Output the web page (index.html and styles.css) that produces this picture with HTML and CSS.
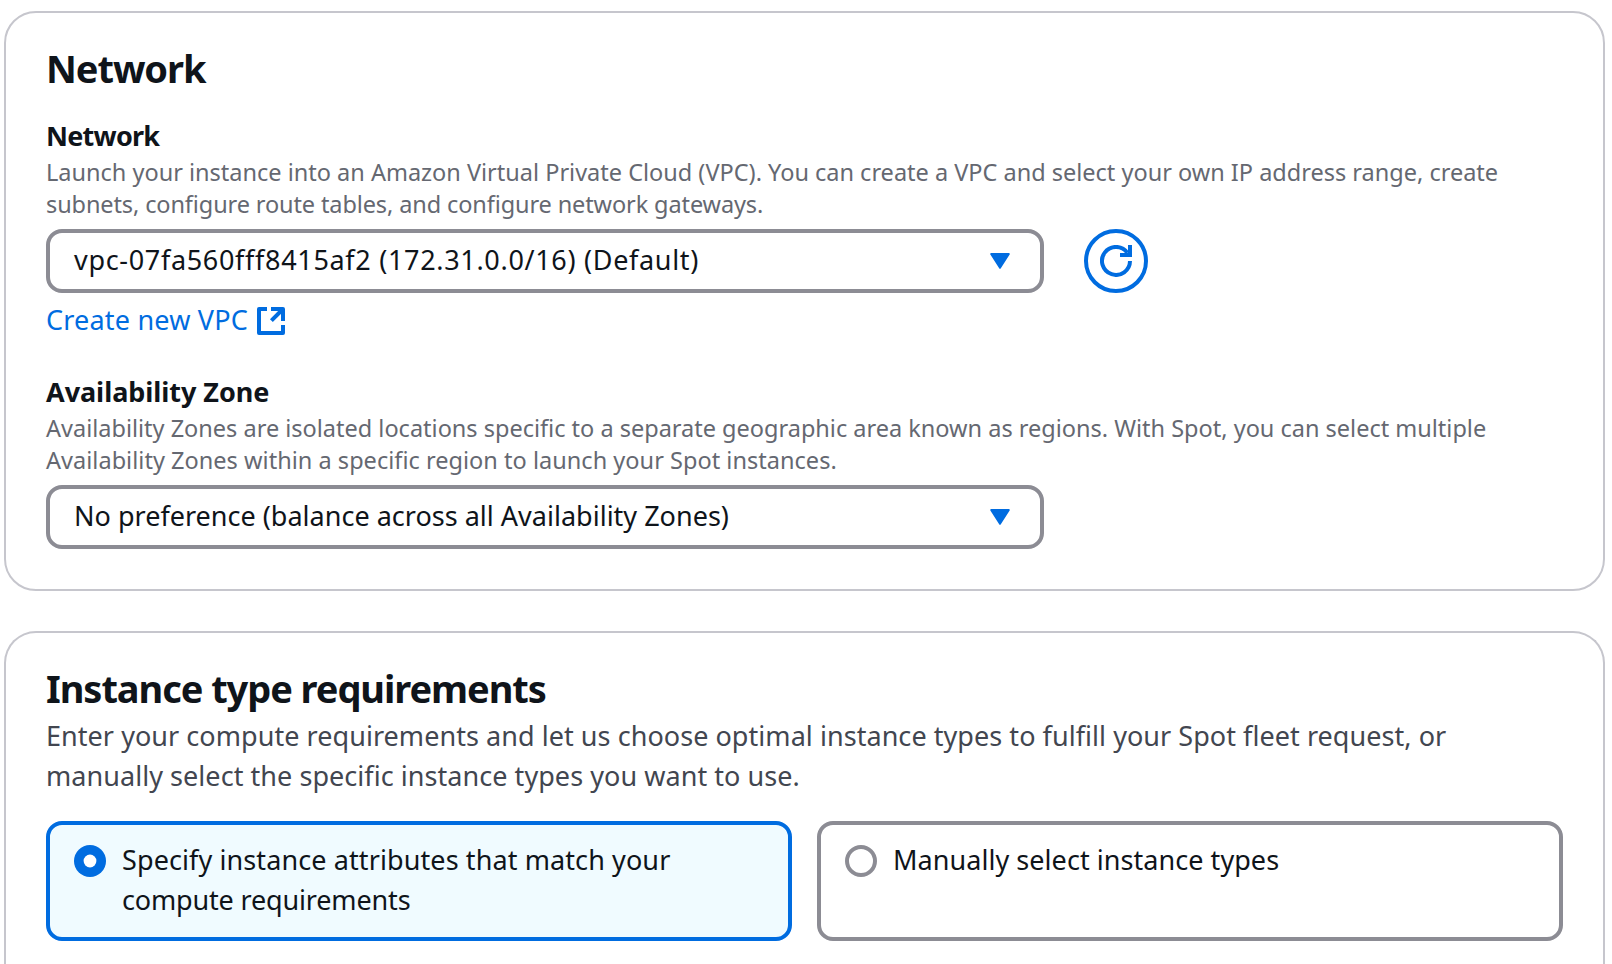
FILE: index.html
```html
<!DOCTYPE html>
<html lang="en">
<head>
<meta charset="utf-8">
<title>Request Spot Instances</title>
<link rel="stylesheet" href="styles.css">
</head>
<body>
<main class="page">
  <section class="card">
    <h2 class="card-title">Network</h2>
    <div class="field">
      <div class="label label-network">Network</div>
      <p class="hint">Launch your instance into an Amazon Virtual Private Cloud (VPC). You can create a VPC and select your own IP address range, create<br><span class="hint-tight">subnets, configure route tables, and configure network gateways.</span></p>
      <div class="control-row">
        <div class="select">
          <span class="value vpc-id">vpc-07fa560fff8415af2 (172.31.0.0/16) (Default)</span>
          <svg class="caret" viewBox="0 0 32 32"><path d="M7.2 9h17.6L16 22.8z"/></svg>
        </div>
        <button class="refresh" aria-label="Refresh">
          <svg class="icon" viewBox="0 0 16 16"><path d="M15 8a7 7 0 1 1-1.3-4.1"/><path d="M10 5h5V0"/></svg>
        </button>
      </div>
      <a class="link"><span>Create new VPC</span><svg class="icon icon-external" viewBox="0 0 16 16"><path d="M14 10v4H2V2h4"/><path d="M8 2h6v6"/><path d="M14 2 8.2 7.8"/></svg></a>
    </div>
    <div class="field">
      <div class="label">Availability Zone</div>
      <p class="hint">Availability Zones are isolated locations specific to a separate geographic area known as regions. With Spot, you can select multiple<br><span class="hint-wide">Availability Zones within a specific region to launch your Spot instances.</span></p>
      <div class="select">
        <span class="value">No preference (balance across all Availability Zones)</span>
        <svg class="caret" viewBox="0 0 32 32"><path d="M7.2 9h17.6L16 22.8z"/></svg>
      </div>
    </div>
  </section>

  <section class="card card-last">
    <h2 class="card-title">Instance type requirements</h2>
    <p class="card-description">Enter your compute requirements and let us choose optimal instance types to fulfill your Spot fleet request, or<br>manually select the specific instance types you want to use.</p>
    <div class="tiles">
      <div class="tile tile-selected">
        <svg class="radio" viewBox="0 0 32 32"><circle class="radio-fill" cx="16" cy="16" r="16"/><circle class="radio-dot" cx="16" cy="16" r="6.4"/></svg>
        <span class="tile-label">Specify instance attributes that match your<br><span class="tile-tight">compute requirements</span></span>
      </div>
      <div class="tile">
        <svg class="radio" viewBox="0 0 32 32"><circle class="radio-ring" cx="16" cy="16" r="14"/></svg>
        <span>Manually select instance types</span>
      </div>
    </div>
  </section>
</main>
</body>
</html>
```
FILE: styles.css
```css
* { box-sizing: border-box; }

body {
  margin: 0;
  background: #fff;
  color: #0f141a;
  font: 27px/40px "Noto Sans", "Open Sans", sans-serif;
  letter-spacing: 0.05px;
}

.page {
  display: flex;
  flex-direction: column;
  gap: 40px;
  width: 1605px;
  height: 964px;
  padding: 11px 0 0 4px;
}

.card {
  padding: 31px 40px 40px;
  border: 2px solid #c6c6cd;
  border-radius: 32px;
}

.card-last {
  flex: 1;
  padding-bottom: 0;
  border-bottom: 0;
  border-radius: 32px 32px 0 0;
}

.card-title {
  margin: 0;
  font-size: 38px;
  line-height: 48px;
  font-weight: 700;
  letter-spacing: -1.06px;
}

.field { margin-top: 24px; }
.field + .field { margin-top: 32px; }

.label {
  font-weight: 700;
  letter-spacing: -0.05px;
}

.label-network { letter-spacing: -0.75px; }

.hint {
  margin: 0 0 9px;
  color: #656871;
  font-size: 23.5px;
  line-height: 32px;
  letter-spacing: 0;
  white-space: nowrap;
}

.hint-tight { letter-spacing: -0.11px; }
.hint-wide { letter-spacing: 0.03px; }

.control-row {
  display: flex;
  gap: 40px;
}

.select {
  display: flex;
  align-items: center;
  justify-content: space-between;
  width: 998px;
  height: 64px;
  padding: 0 24px;
  border: 4px solid #8c8c94;
  border-radius: 16px;
  white-space: nowrap;
}

.value {
  padding-bottom: 2px;
  letter-spacing: 0.01px;
}

.vpc-id { letter-spacing: 0.68px; }

.caret {
  width: 32px;
  height: 32px;
  fill: #006ce0;
  stroke: #006ce0;
  stroke-width: 2;
  stroke-linejoin: round;
}

.refresh {
  display: flex;
  align-items: center;
  justify-content: center;
  width: 64px;
  height: 64px;
  padding: 0;
  border: 4px solid #006ce0;
  border-radius: 50%;
  background: #fff;
}

.icon {
  width: 32px;
  height: 32px;
  fill: none;
  stroke: #006ce0;
  stroke-width: 2;
}

.icon-external {
  margin-top: 2px;
  stroke-linejoin: round;
}

.link {
  display: flex;
  align-items: center;
  gap: 7px;
  margin-top: 7px;
  color: #006ce0;
  letter-spacing: 0.2px;
}

.card-description {
  margin: 4px 0 25px;
  color: #424650;
  white-space: nowrap;
}

.tiles {
  display: grid;
  grid-template-columns: 1fr 1fr;
  gap: 25px;
}

.tile {
  display: flex;
  gap: 16px;
  height: 120px;
  padding: 15px 24px 17px;
  border: 4px solid #8c8c94;
  border-radius: 16px;
  white-space: nowrap;
}

.tile-selected {
  border-color: #006ce0;
  background: #f0fbff;
}

.tile-label { letter-spacing: 0.1px; }
.tile-tight { letter-spacing: -0.16px; }

.radio {
  width: 32px;
  height: 32px;
  margin-top: 5px;
}

.radio-fill { fill: #006ce0; }
.radio-dot { fill: #fff; }
.radio-ring {
  fill: #fff;
  stroke: #8c8c94;
  stroke-width: 4;
}
```
